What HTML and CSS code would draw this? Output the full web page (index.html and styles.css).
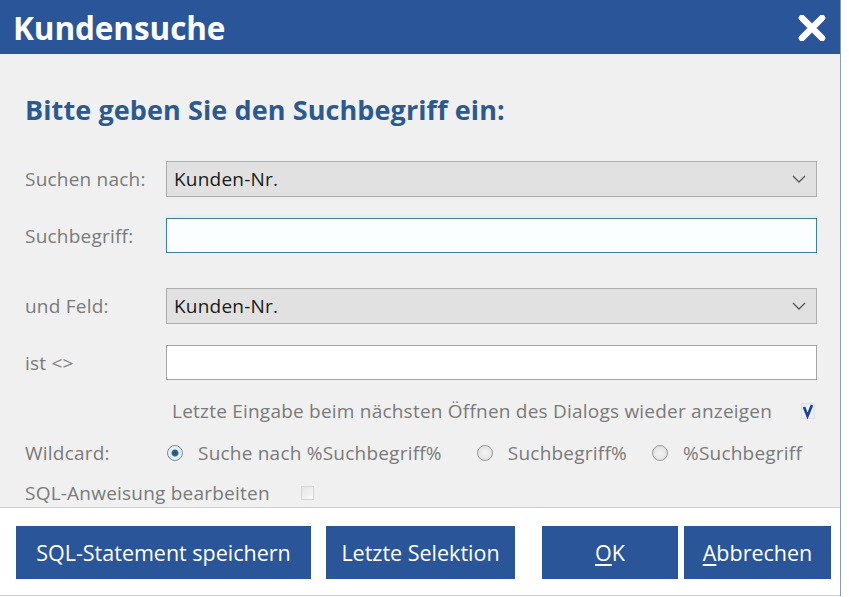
FILE: index.html
```html
<!DOCTYPE html>
<html>
<head>
    <meta charset="UTF-8">
    <title>Kundensuche</title>
    <link rel="stylesheet" href="styles.css">
</head>
<body>
    <div class="dialog">
        <div class="titlebar">
            <span class="title">Kundensuche</span>
            <a href="javascript:;" class="close">
                <svg width="28" height="26" viewBox="0 0 28 26">
                    <path d="M4 3 L24 23 M24 3 L4 23" stroke="#fff" stroke-width="6.5" stroke-linecap="round"/>
                </svg>
            </a>
        </div>
        <div class="content">
            <h1 class="prompt">Bitte geben Sie den Suchbegriff ein:</h1>

            <div class="row row_first">
                <label class="label">Suchen nach:</label>
                <div class="field select">
                    <span>Kunden-Nr.</span>
                    <svg class="chevron" width="14" height="8" viewBox="0 0 14 8">
                        <polyline points="1,1 7,7 13,1" fill="none" stroke="#555" stroke-width="1.3"/>
                    </svg>
                </div>
            </div>
            <div class="row row_term">
                <label class="label">Suchbegriff:</label>
                <div class="field input focus"></div>
            </div>
            <div class="row row_field">
                <label class="label">und Feld:</label>
                <div class="field select">
                    <span>Kunden-Nr.</span>
                    <svg class="chevron" width="14" height="8" viewBox="0 0 14 8">
                        <polyline points="1,1 7,7 13,1" fill="none" stroke="#555" stroke-width="1.3"/>
                    </svg>
                </div>
            </div>
            <div class="row row_not">
                <label class="label">ist &lt;&gt;</label>
                <div class="field input"></div>
            </div>

            <div class="option remember">
                <span>Letzte Eingabe beim nächsten Öffnen des Dialogs wieder anzeigen</span>
                <svg class="check" width="14" height="16" viewBox="0 0 14 16">
                    <rect x="0.5" y="0.5" width="13" height="15" fill="#eceef6" stroke="#dde0e8"/>
                    <path d="M3 4 L6.5 13 L11 2" fill="none" stroke="#1f3f8f" stroke-width="2.6"/>
                </svg>
            </div>
            <div class="option wildcard">
                <span class="label">Wildcard:</span>
                <span class="radio on"></span><span class="radio_text first">Suche nach %Suchbegriff%</span>
                <span class="radio"></span><span class="radio_text second">Suchbegriff%</span>
                <span class="radio"></span><span class="radio_text">%Suchbegriff</span>
            </div>
            <div class="option sql">
                <span>SQL-Anweisung bearbeiten</span>
                <span class="box_off"></span>
            </div>
        </div>
        <div class="footer">
            <a href="javascript:;" class="btn btn_save">SQL-Statement speichern</a>
            <a href="javascript:;" class="btn btn_last">Letzte Selektion</a>
            <a href="javascript:;" class="btn btn_ok"><u>O</u>K</a>
            <a href="javascript:;" class="btn btn_cancel"><u>A</u>bbrechen</a>
        </div>
    </div>
</body>
</html>
```

FILE: styles.css
```css
* {
    margin: 0;
    padding: 0;
    box-sizing: border-box;
}
body {
    background: #fff;
    font-family: "Open Sans", "Noto Sans", sans-serif;
    font-size: 19px;
    letter-spacing: 0.22px;
    color: #7a7a7a;
}
a {
    text-decoration: none;
}
.dialog {
    width: 841px;
    border-right: 1px solid #8d9bb0;
}
.titlebar {
    height: 54px;
    background: #2a5699;
    display: flex;
    align-items: center;
    justify-content: space-between;
    padding: 0 14px 0 13px;
}
.title {
    color: #fff;
    font-size: 31.5px;
    font-weight: bold;
    letter-spacing: -0.1px;
}
.close {
    display: block;
    height: 26px;
    margin-top: 2px;
}
.content {
    background: #f0f0f0;
    height: 454px;
    padding: 0 23px 0 25px;
    border-bottom: 1px solid #cfcfcf;
}
.prompt {
    color: #2c5a8e;
    font-size: 27px;
    font-weight: bold;
    line-height: 30px;
    padding-top: 41px;
    letter-spacing: 0.1px;
}
.row {
    display: flex;
    align-items: center;
}
.row .label {
    width: 141px;
}
.row_first {
    margin-top: 36px;
}
.row_term {
    margin-top: 21px;
}
.row_field {
    margin-top: 35px;
}
.row_not {
    margin-top: 21px;
}
.field {
    width: 651px;
    height: 36px;
}
.select {
    background: #e1e1e1;
    border: 1px solid #adadad;
    display: flex;
    align-items: center;
    justify-content: space-between;
    padding: 0 10px 0 7px;
    color: #1a1a1a;
}
.input {
    background: #fff;
    border: 1px solid #a5a5a5;
    height: 35px;
}
.input.focus {
    border-color: #3f7f9f;
    background: #fbfeff;
    box-shadow: 0 -2px 3px #dceff9;
}
.option {
    display: flex;
    align-items: center;
    height: 26px;
}
.remember {
    margin-top: 18px;
    padding-left: 147px;
}
.remember .check {
    margin-left: 29px;
}
.wildcard {
    margin-top: 16px;
}
.wildcard .label {
    width: 142px;
}
.radio {
    width: 16px;
    height: 16px;
    border-radius: 50%;
    border: 1px solid #9a9a9a;
    background: radial-gradient(circle, #f4f4f4 0, #dcdcdc 100%);
    margin-right: 15px;
}
.radio.on {
    border-color: #6e8fa8;
    background: radial-gradient(circle, #1d4f6e 0, #2f6f93 3px, #e6eef3 4px, #f6f8fa 100%);
}
.radio_text.first {
    margin-right: 35px;
}
.radio_text.second {
    margin-right: 25px;
}
.sql {
    margin-top: 14px;
}
.box_off {
    width: 13px;
    height: 14px;
    border: 1px solid #d6d6d6;
    background: linear-gradient(135deg, #e4e4e4, #fafafa);
    margin-left: 31px;
}
.footer {
    background: #fff;
    height: 88px;
    padding: 18px 0 0 16px;
    display: flex;
    align-items: flex-start;
    border-bottom: 1px solid #cfcfcf;
}
.btn {
    display: flex;
    align-items: center;
    justify-content: center;
    height: 53px;
    background: #2a5699;
    color: #fff;
    font-size: 21.5px;
    letter-spacing: 0;
}
.btn u {
    text-underline-offset: 3px;
}
.btn_save {
    width: 295px;
}
.btn_last {
    width: 189px;
    margin-left: 15px;
}
.btn_ok {
    width: 136px;
    margin-left: 27px;
}
.btn_cancel {
    width: 147px;
    margin-left: 6px;
}
```
